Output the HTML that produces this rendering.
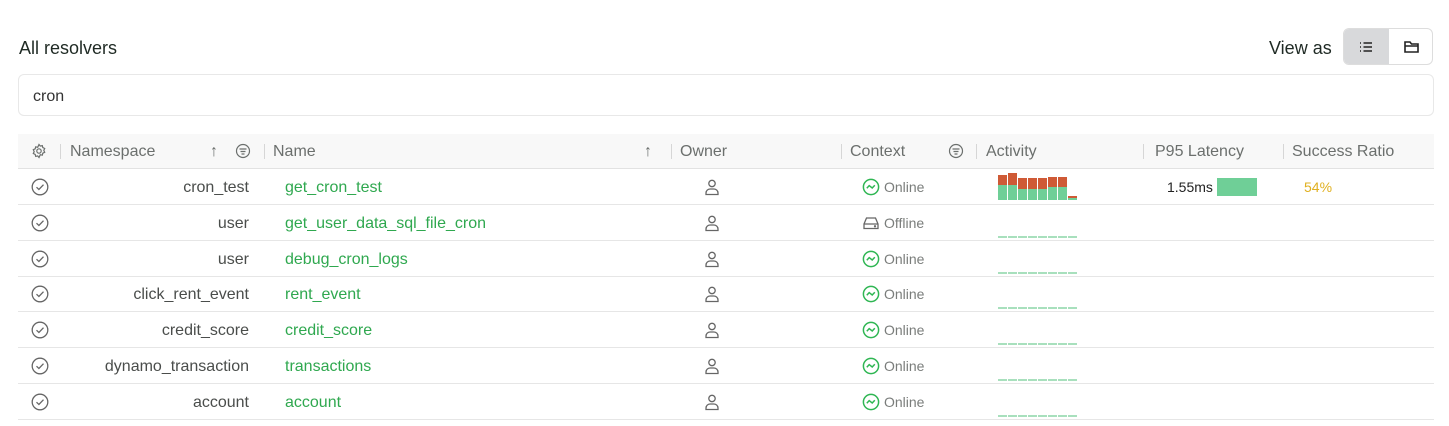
<!DOCTYPE html>
<html><head><style>
*{box-sizing:border-box;margin:0;padding:0}
body{width:1449px;height:426px;background:#fff;font-family:"Liberation Sans",sans-serif;position:relative;overflow:hidden;color:#3a3f3c}
.a{position:absolute}
.title{left:19px;top:38px;font-size:18px;color:#1f2a24}
.va{left:1269px;top:38px;font-size:18px;color:#1f2a24}
.tog{left:1343px;top:28px;width:90px;height:37px;border:1px solid #ddd;border-radius:6px;overflow:hidden}
.tog div{position:absolute;top:0;height:100%;width:45px}
.search{left:18px;top:74px;width:1416px;height:42px;border:1px solid #e8e8e8;border-radius:6px;font-size:16px;padding:13px 14px;color:#333}
.hdr{left:18px;top:134px;width:1416px;height:35px;background:#f8f8f8;border-bottom:1px solid #e2e2e2}
.h{position:absolute;top:143px;font-size:16px;color:#6b6f6d}
.sep{position:absolute;top:144px;width:1px;height:15px;background:#d6d6d6}
.row{position:absolute;left:18px;width:1416px;height:36px;border-bottom:1px solid #e6e6e6}
.ns{position:absolute;right:1200px;font-size:16px;color:#4a4d4b;text-align:right}
.nm{position:absolute;left:285px;font-size:16px;color:#2fa84f}
.ctx{position:absolute;left:884px;font-size:14px;color:#7a7d7b}
</style></head><body>
<div class="a title">All resolvers</div>
<div class="a va">View as</div>
<div class="a tog"><div style="left:0;background:#d8d9db"></div>
<svg class="a" style="left:14px;top:10px" width="16" height="16" viewBox="0 0 16 16" fill="none" stroke="#222" stroke-width="1.6"><path d="M5.5 4h8.5M5.5 8h8.5M5.5 12h8.5M2 4h1M2 8h1M2 12h1"/></svg>
<svg class="a" style="left:59px;top:10px" width="17" height="16" viewBox="0 0 17 16" fill="none" stroke="#222" stroke-width="1.6"><path d="M2 3h5l1.5 2H15v8H2z M2 7h13"/></svg></div>
<div class="a search">cron</div>
<div class="a hdr"></div>
<svg class="a" style="left:31px;top:143px" width="16" height="16" viewBox="0 0 16 16" fill="none" stroke="#6b6f6d" stroke-width="1.2"><circle cx="8" cy="8" r="2.2"/><path d="M8 1.5l1.3 1.6 2-.5.5 2 1.9.9-.9 1.9.9 1.9-1.9.9-.5 2-2-.5L8 14.5l-1.3-1.6-2 .5-.5-2-1.9-.9.9-1.9-.9-1.9 1.9-.9.5-2 2 .5z"/></svg>
<div class="sep" style="left:60px"></div><div class="h" style="left:70px">Namespace</div>
<div class="h" style="left:210px">↑</div>
<svg class="a" style="left:235px;top:143px" width="16" height="16" viewBox="0 0 16 16" fill="none" stroke="#6b6f6d" stroke-width="1.2"><circle cx="8" cy="8" r="6.5"/><path d="M4.5 6h7M5.5 8.5h5M6.5 11h3"/></svg>
<div class="sep" style="left:264px"></div><div class="h" style="left:273px">Name</div>
<div class="h" style="left:644px">↑</div>
<div class="sep" style="left:671px"></div><div class="h" style="left:680px">Owner</div>
<div class="sep" style="left:841px"></div><div class="h" style="left:850px">Context</div>
<svg class="a" style="left:948px;top:143px" width="16" height="16" viewBox="0 0 16 16" fill="none" stroke="#6b6f6d" stroke-width="1.2"><circle cx="8" cy="8" r="6.5"/><path d="M4.5 6h7M5.5 8.5h5M6.5 11h3"/></svg>
<div class="sep" style="left:976px"></div><div class="h" style="left:986px">Activity</div>
<div class="sep" style="left:1143px"></div><div class="h" style="left:1155px">P95 Latency</div>
<div class="sep" style="left:1283px"></div><div class="h" style="left:1292px">Success Ratio</div>

<div id="rows"></div>
<script>
var d=[["cron_test","get_cron_test",1],["user","get_user_data_sql_file_cron",0],["user","debug_cron_logs",1],["click_rent_event","rent_event",1],["credit_score","credit_score",1],["dynamo_transaction","transactions",1],["account","account",1]];
var h="";
d.forEach(function(r,i){
 var top=169+i*35.8, c=top+18;
 h+='<div class="row" style="top:'+top+'px"></div>';
 h+='<svg class="a" style="left:31px;top:'+(c-9)+'px" width="18" height="18" viewBox="0 0 18 18" fill="none" stroke="#666" stroke-width="1.3"><circle cx="9" cy="9" r="7.8"/><path d="M5.5 9.2l2.4 2.3 4.6-4.8"/></svg>';
 h+='<div class="ns" style="top:'+(c-8)+'px;right:1200px">'+r[0]+'</div>';
 h+='<div class="nm" style="top:'+(c-8)+'px">'+r[1]+'</div>';
 h+='<svg class="a" style="left:704px;top:'+(c-9)+'px" width="16" height="18" viewBox="0 0 16 18" fill="none" stroke="#666" stroke-width="1.3"><circle cx="8" cy="5.5" r="3.2"/><path d="M2 16.5v-1.5a4 4 0 0 1 4-4h4a4 4 0 0 1 4 4v1.5z"/></svg>';
 if(r[2]) h+='<svg class="a" style="left:862px;top:'+(c-9)+'px" width="18" height="18" viewBox="0 0 18 18" fill="none" stroke="#2fb653" stroke-width="1.5"><circle cx="9" cy="9" r="7.6"/><path d="M4.8 10.2l2.4-2.6 3 2.4 2.6-2.8"/></svg><div class="ctx" style="top:'+(c-8)+'px">Online</div>';
 else h+='<svg class="a" style="left:862px;top:'+(c-9)+'px" width="18" height="18" viewBox="0 0 18 18" fill="none" stroke="#666" stroke-width="1.3"><path d="M2 10l2.5-6h9L16 10v4.5H2z M2 10h14"/><circle cx="13" cy="12.3" r=".5"/></svg><div class="ctx" style="top:'+(c-8)+'px">Offline</div>';
 if(i==0){
  var b=[[175,185],[173,185],[178,189],[178,189],[178,189],[177,187],[177,187],[196,198]];
  b.forEach(function(v,k){var x=998+k*10;
   h+='<div class="a" style="left:'+x+'px;top:'+v[0]+'px;width:9px;height:'+(v[1]-v[0])+'px;background:#cf5a36"></div>';
   h+='<div class="a" style="left:'+x+'px;top:'+v[1]+'px;width:9px;height:'+(200-v[1])+'px;background:#6fcf97"></div>';});
  h+='<div class="a" style="left:1167px;top:179px;font-size:14px;color:#222">1.55ms</div>';
  h+='<div class="a" style="left:1217px;top:178px;width:40px;height:18px;background:#6fcf97"></div>';
  h+='<div class="a" style="left:1304px;top:179px;font-size:14px;color:#e0b020">54%</div>';
 } else {
  for(var k=0;k<8;k++) h+='<div class="a" style="left:'+(998+k*10)+'px;top:'+(top+31)+'px;width:9px;height:2px;background:#a8e0bd"></div>';
 }
});
document.getElementById('rows').innerHTML=h;
</script>
</body></html>
